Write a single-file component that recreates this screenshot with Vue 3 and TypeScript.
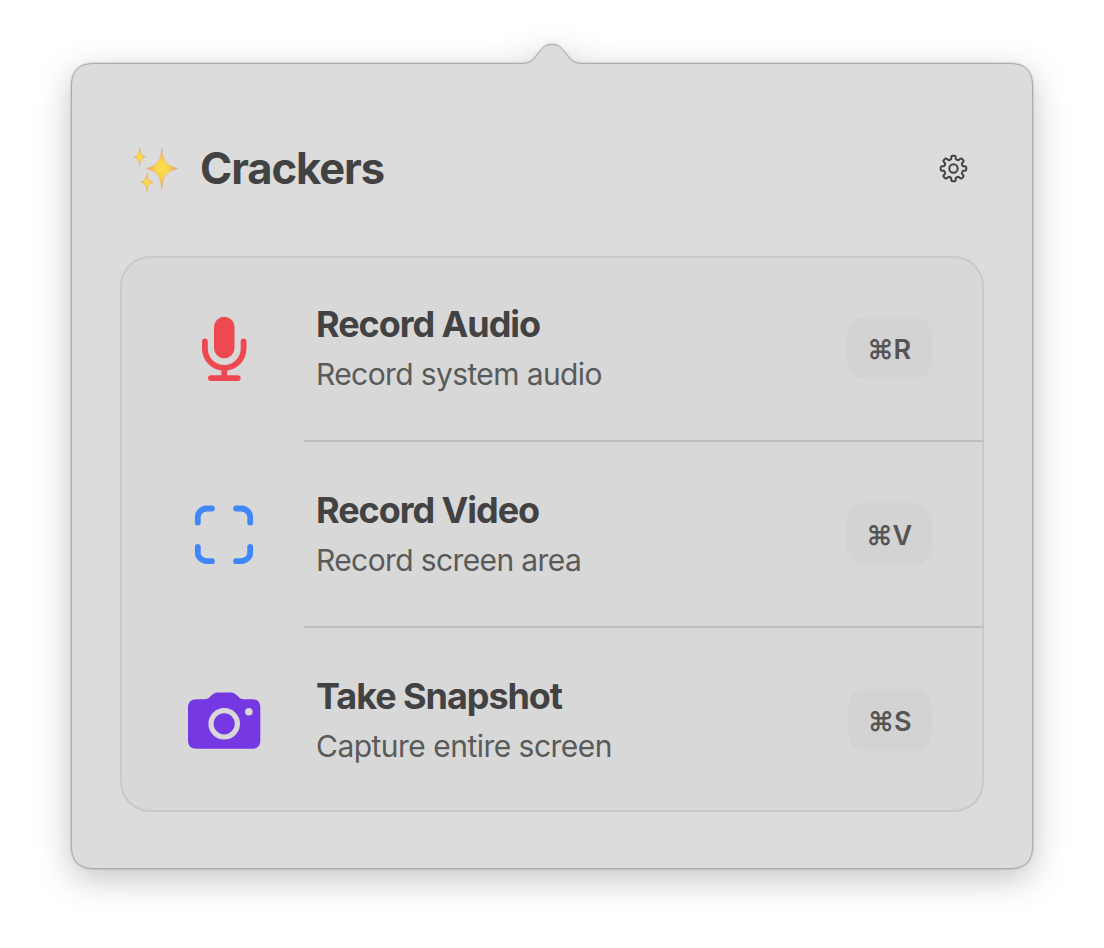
<script setup lang="ts">
type IconName = 'mic' | 'frame' | 'camera'

interface Action {
  icon: IconName
  title: string
  detail: string
  key: string
}

const actions: Action[] = [
  { icon: 'mic', title: 'Record Audio', detail: 'Record system audio', key: 'R' },
  { icon: 'frame', title: 'Record Video', detail: 'Record screen area', key: 'V' },
  { icon: 'camera', title: 'Take Snapshot', detail: 'Capture entire screen', key: 'S' },
]

// Closed outline of an eight-toothed cog centred on the origin.
function cogOutline(): string {
  const points: string[] = []
  for (let deg = 0; deg < 360; deg += 1.5) {
    const a = (deg * Math.PI) / 180
    const r = 11.1 + 1.7 * Math.tanh(3 * Math.cos(8 * a) + 0.1)
    points.push(`${(r * Math.cos(a)).toFixed(2)} ${(r * Math.sin(a)).toFixed(2)}`)
  }
  return `M${points.join('L')}Z`
}

const cog = cogOutline()
</script>

<template>
  <main class="stage">
    <section class="popover">
      <svg class="shape" viewBox="0 0 1104 948" width="1104" height="948" aria-hidden="true">
        <path
          d="M94 63.5H523C531 63.5 534 59 539 52.500C543 47 546 44.500 552 44.500C558 44.500 561 47 565 52.500C570 59 573 63.500 581 63.500H1010Q1032.500 63.500 1032.500 86V846Q1032.500 868.500 1010 868.500H94Q71.500 868.500 71.500 846V86Q71.500 63.500 94 63.500Z"
        />
      </svg>

      <header class="header">
        <svg class="sparkles" viewBox="0 0 48 48" width="48" height="48" aria-hidden="true">
          <defs>
            <radialGradient id="gold">
              <stop offset="0" stop-color="#fbe04a" />
              <stop offset="0.4" stop-color="#f8d552" />
              <stop offset="1" stop-color="#eb9a58" />
            </radialGradient>
          </defs>
          <g class="stars">
            <path d="M29.800 3C30.800 15 33.500 20.500 46 23.500C33.500 26.500 31.200 31 29.800 44.500C28.400 31 26 26.500 14.500 23.500C26 20.500 28.800 15 29.800 3Z" />
            <path d="M7.700 2.500C8.300 8 9.400 10.700 13.500 12C9.400 13.300 8.300 15.700 7.700 21.300C7.100 15.700 6 13.300 1.900 12C6 10.700 7.100 8 7.700 2.500Z" />
            <path d="M15 28C15.600 33.500 17 36 21.300 37.300C17 38.600 15.600 41 15 46.300C14.400 41 13 38.600 9 37.300C13 36 14.400 33.500 15 28Z" />
          </g>
        </svg>
        <h1>Crackers</h1>
        <button class="settings" type="button" aria-label="Settings">
          <svg viewBox="-14.5 -14.5 30 30" width="30" height="30">
            <path :d="cog" />
            <circle r="4.200" />
          </svg>
        </button>
      </header>

      <ul class="card">
        <li v-for="action in actions" :key="action.key" class="row">
          <span class="icon">
            <svg v-if="action.icon === 'mic'" class="mic" viewBox="0 -1 80 80" width="80" height="80">
              <rect x="30" y="7.700" width="20.500" height="41.500" rx="10.250" />
              <path d="M20.900 32.500V39.500A19.350 19.350 0 0 0 59.600 39.500V32.500M40.250 59V68M26.900 69.100H53.800" />
            </svg>
            <svg v-else-if="action.icon === 'frame'" class="frame" viewBox="0 0 80 80" width="80" height="80">
              <path d="M13.800 28.500V23.500A9 9 0 0 1 22.800 14.500H27.900M52.100 14.500H57.200A9 9 0 0 1 66.200 23.500V28.500M66.200 52.800V58.200A9 9 0 0 1 57.200 67.200H52.100M27.900 67.200H22.800A9 9 0 0 1 13.800 58.200V52.800" />
            </svg>
            <svg v-else class="camera" viewBox="0 -2 80 80" width="80" height="80">
              <path d="M12.500 17.200H20.500C23.500 17.200 24.600 16.200 26.300 14.500C28.500 12.200 30.500 10.500 34 10.500H46.500C50 10.500 52 12.200 54.200 14.500C55.900 16.200 57 17.200 60 17.200H68Q76.300 17.200 76.300 25.500V58.500Q76.300 66.800 68 66.800H12.500Q4 66.800 4 58.500V25.500Q4 17.200 12.500 17.200Z" />
              <circle class="lens" cx="40.200" cy="41.800" r="13.200" />
              <circle class="light" cx="64.800" cy="29.800" r="3.800" />
            </svg>
          </span>
          <div class="body">
            <div class="copy">
              <h2>{{ action.title }}</h2>
              <p :class="action.icon">{{ action.detail }}</p>
            </div>
            <kbd :class="action.icon">⌘{{ action.key }}</kbd>
          </div>
        </li>
      </ul>
    </section>
  </main>
</template>

<style>
body {
  margin: 0;
  background: #fff;
}
</style>

<style scoped>
.stage {
  box-sizing: border-box;
  width: 1104px;
  height: 948px;
  padding: 63px 71px 79px;
  overflow: hidden;
  font-family: Inter, "Liberation Sans", sans-serif;
  color: #424242;
}

.popover {
  box-sizing: border-box;
  width: 962px;
  height: 806px;
  padding: 0 49px;
}

.shape {
  position: absolute;
  top: 0;
  left: 0;
  z-index: -1;
  filter: drop-shadow(0 0 1px rgba(0, 0, 0, 0.25)) drop-shadow(0 10px 17px rgba(0, 0, 0, 0.23));
}

.shape path {
  fill: #dcdcdc;
  stroke: #ababab;
  stroke-width: 1;
}

.header {
  display: flex;
  align-items: center;
  box-sizing: border-box;
  height: 193px;
  padding: 17px 15px 0 12px;
}

.sparkles {
  display: block;
  margin-top: 1px;
}

.stars {
  fill: url(#gold);
  stroke: #e9a45c;
  stroke-opacity: 0.5;
  stroke-width: 0.800;
  stroke-linejoin: round;
}

h1 {
  flex: 1;
  margin: 0 0 0 20px;
  font-size: 43.500px;
  line-height: 54px;
  font-weight: 700;
  letter-spacing: -1.050px;
}

.settings {
  display: flex;
  margin-top: 2px;
  padding: 0;
  border: 0;
  background: none;
}

.settings svg {
  fill: none;
  stroke: #424242;
  stroke-width: 2;
  stroke-linejoin: round;
}

.card {
  box-sizing: border-box;
  width: 864px;
  height: 556px;
  margin: 0;
  padding: 0;
  list-style: none;
  border-radius: 30px;
  background: #d8d8d8;
  box-shadow: inset 0 0 0 2px #c9c9c9;
}

.row {
  display: flex;
  height: 184px;
}

.row + .row {
  height: 186px;
}

.icon {
  display: flex;
  align-items: center;
  justify-content: center;
  width: 184px;
  padding: 0 0 0 24px;
  box-sizing: border-box;
}

.row + .row .icon {
  padding-top: 2px;
}

.mic {
  fill: #ee4950;
}

.mic path {
  fill: none;
  stroke: #ee4950;
  stroke-width: 5.800;
  stroke-linecap: round;
}

.frame path {
  fill: none;
  stroke: #3f86f7;
  stroke-width: 5.800;
  stroke-linecap: round;
}

svg.camera {
  fill: #7638e2;
}

.lens {
  fill: none;
  stroke: #d8d8d8;
  stroke-width: 5.200;
}

.light {
  fill: #d8d8d8;
}

.body {
  display: flex;
  align-items: center;
  justify-content: space-between;
  flex: 1;
  padding: 0 52px 0 12px;
}

.row + .row .body {
  border-top: 2px solid #bfbfbf;
}

h2,
p {
  margin: 0;
  white-space: nowrap;
}

.copy {
  padding-top: 2px;
}

h2 {
  font-size: 36px;
  line-height: 48px;
  font-weight: 650;
  letter-spacing: -1.060px;
}

p {
  margin-top: 2px;
  font-size: 30px;
  line-height: 48px;
  letter-spacing: -0.620px;
  color: #5a5a5a;
}

p.camera {
  letter-spacing: -0.520px;
}

kbd {
  display: flex;
  align-items: center;
  justify-content: center;
  box-sizing: border-box;
  width: 85px;
  height: 62px;
  padding: 2px 1px 0 0;
  border-radius: 18px;
  background: #d3d3d3;
  color: #555;
  font-family: inherit;
  font-size: 27px;
  font-weight: 600;
  letter-spacing: -0.300px;
}

kbd.camera {
  width: 84px;
}
</style>
